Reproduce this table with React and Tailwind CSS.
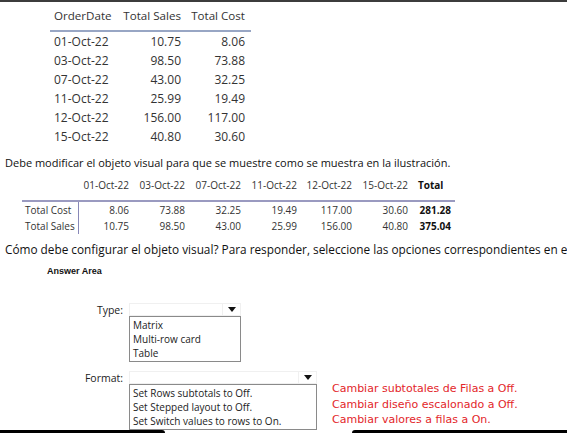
import React from "react";

const orders = [
  ["01-Oct-22", "10.75", "8.06"],
  ["03-Oct-22", "98.50", "73.88"],
  ["07-Oct-22", "43.00", "32.25"],
  ["11-Oct-22", "25.99", "19.49"],
  ["12-Oct-22", "156.00", "117.00"],
  ["15-Oct-22", "40.80", "30.60"],
];

const dates = ["01-Oct-22", "03-Oct-22", "07-Oct-22", "11-Oct-22", "12-Oct-22", "15-Oct-22"];
const matrixRows = [
  ["Total Cost", ["8.06", "73.88", "32.25", "19.49", "117.00", "30.60"], "281.28"],
  ["Total Sales", ["10.75", "98.50", "43.00", "25.99", "156.00", "40.80"], "375.04"],
];

const seg = { fontFamily: '"Open Sans", "Noto Sans", sans-serif' };

function Dropdown({ width, items }) {
  return (
    <div className="flex flex-col" style={{ width }}>
      <div className="flex h-[13px] border border-[#f0f0f0]">
        <div className="flex-1" />
        <div className="flex w-[18px] items-center justify-center border-l border-[#f0f0f0]">
          <svg width="8" height="5" viewBox="0 0 8 5">
            <path d="M0 0h8L4 5z" fill="#111" />
          </svg>
        </div>
      </div>
      <div className="border border-[#8a8a8a] px-[3px] py-[1px] text-[10px] leading-[14px] text-[#222]">
        {items.map((it) => (
          <div key={it} className="whitespace-nowrap">{it}</div>
        ))}
      </div>
    </div>
  );
}

export default function App() {
  return (
    <div className="relative h-[433px] w-[567px] overflow-hidden bg-white" style={seg}>
      {/* top edge of the previous picture */}
      <div className="h-[2px] bg-[#3c3c3c]" />

      {/* first table */}
      <div className="ml-[50px] w-[201px] text-[12px] text-[#333]">
        <div className="grid h-[30px] grid-cols-[66px_65px_70px] items-center border-b-2 border-[#98a6c4] text-[11.6px]">
          <div className="whitespace-nowrap pl-[4px]">OrderDate</div>
          <div className="whitespace-nowrap text-right">Total Sales</div>
          <div className="whitespace-nowrap pr-[6px] text-right">Total Cost</div>
        </div>
        {orders.map(([d, s, c]) => (
          <div key={d} className="grid h-[19px] grid-cols-[66px_65px_70px] items-center">
            <div className="pl-[4px]">{d}</div>
            <div className="text-right">{s}</div>
            <div className="pr-[6px] text-right">{c}</div>
          </div>
        ))}
      </div>

      <p className="mt-[10px] pl-[5px] text-[11px] leading-[14px] text-[#111]">
        Debe modificar el objeto visual para que se muestre como se muestra en la ilustración.
      </p>

      {/* matrix */}
      <div className="ml-[22px] mt-[8px] w-[433px] text-[10px] text-[#333]">
        <div className="grid grid-cols-[57px_50px_56px_56px_56px_55px_56px_47px] border-b-2 border-[#9a9ac0] pb-[8px] leading-[14px]">
          <div />
          {dates.map((d) => (
            <div key={d} className="whitespace-nowrap text-right">{d}</div>
          ))}
          <div className="pl-[10px] font-bold text-[#111]">Total</div>
        </div>
        <div className="grid grid-cols-[57px_50px_56px_56px_56px_55px_56px_47px] leading-[16px]">
          {matrixRows.map(([label, vals, total]) => (
            <React.Fragment key={label}>
              <div className="whitespace-nowrap border-r border-[#8888b8] pl-[3px]">{label}</div>
              {vals.map((v, i) => (
                <div key={i} className="text-right">{v}</div>
              ))}
              <div className="pr-[4px] text-right font-bold text-[#111]">{total}</div>
            </React.Fragment>
          ))}
        </div>
      </div>

      <p className="mt-[8px] whitespace-nowrap pl-[5px] text-[11.8px] leading-[14px] text-[#111]">
        Cómo debe configurar el objeto visual? Para responder, seleccione las opciones correspondientes en el área de respuesta.
      </p>

      <div
        className="ml-[47px] mt-[8px] text-[9px] font-bold leading-[14px] text-[#111]"
        style={{ fontFamily: '"Liberation Sans", Arial, sans-serif' }}
      >
        Answer Area
      </div>

      {/* Type */}
      <div className="mt-[25px] flex text-[10.5px] text-[#222]">
        <div className="w-[123px] text-right leading-[14px]">Type:</div>
        <div className="ml-[6px]">
          <Dropdown width="112px" items={["Matrix", "Multi-row card", "Table"]} />
        </div>
      </div>

      {/* Format */}
      <div className="mt-[9px] flex text-[10.5px] text-[#222]">
        <div className="w-[123px] text-right leading-[14px]">Format:</div>
        <div className="ml-[6px]">
          <Dropdown
            width="188px"
            items={["Set Rows subtotals to Off.", "Set Stepped layout to Off.", "Set Switch values to rows to On."]}
          />
        </div>
        <div
          className="ml-[15px] mt-[10px] text-[11px] leading-[15.5px] text-[#e3262a]"
          style={{ fontFamily: '"DejaVu Sans", sans-serif' }}
        >
          <div>Cambiar subtotales de Filas a Off.</div>
          <div>Cambiar diseño escalonado a Off.</div>
          <div>Cambiar valores a filas a On.</div>
        </div>
      </div>

      {/* bottom edge */}
      <div className="absolute bottom-0 left-0 right-0 flex h-[3px] justify-between">
        <div className="w-[165px] rounded-tr-[3px] bg-black" />
        <div className="w-[215px] rounded-tl-[3px] bg-black" />
      </div>
    </div>
  );
}
